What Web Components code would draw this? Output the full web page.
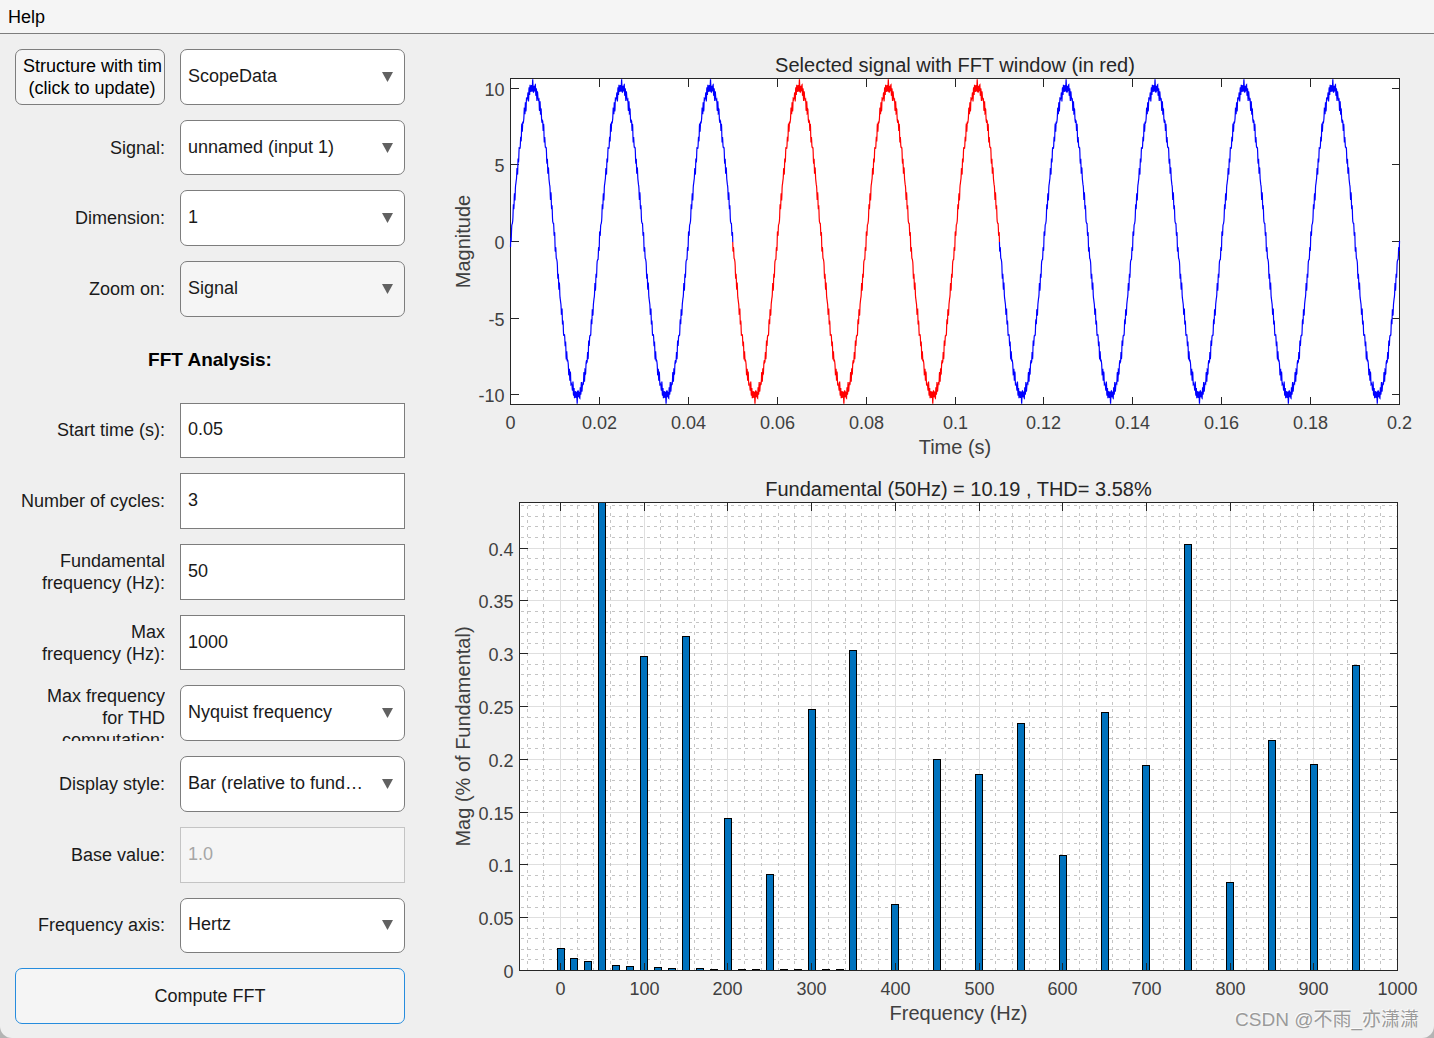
<!DOCTYPE html>
<html lang="en">
<head>
<meta charset="utf-8">
<title>FFT Analyzer</title>
<style>
  html { background: #b4b4b4; }
  body { margin: 0; font-family: "Liberation Sans", Arial, sans-serif; font-size: 18px; line-height: 22px; color: #1a1a1a; }
</style>
</head>
<body>
<fft-window>
  <menu-strip slot="menu">Help</menu-strip>
  <settings-panel slot="panel">
    <select-row action="Structure with tim|(click to update)" value="ScopeData"></select-row>
    <select-row label="Signal:" value="unnamed (input 1)"></select-row>
    <select-row label="Dimension:" value="1"></select-row>
    <select-row label="Zoom on:" value="Signal" tone="muted"></select-row>
    <section-title>FFT Analysis:</section-title>
    <text-row label="Start time (s):" value="0.05"></text-row>
    <text-row label="Number of cycles:" value="3"></text-row>
    <text-row label="Fundamental frequency&nbsp;(Hz):" value="50"></text-row>
    <text-row label="Max frequency&nbsp;(Hz):" value="1000"></text-row>
    <select-row label="Max frequency for THD computation:" value="Nyquist frequency"></select-row>
    <select-row label="Display style:" value="Bar (relative to fundamental)"></select-row>
    <text-row label="Base value:" value="1.0" disabled></text-row>
    <select-row label="Frequency axis:" value="Hertz"></select-row>
    <action-button>Compute FFT</action-button>
  </settings-panel>
  <signal-plot slot="signal"></signal-plot>
  <spectrum-plot slot="spectrum"></spectrum-plot>
  <water-mark slot="mark">CSDN @不雨_亦潇潇</water-mark>
</fft-window>

<script>
const base = `
  *, *::before, *::after { box-sizing: border-box; }
  button, input, select { font: inherit; color: inherit; margin: 0; }
`;

class BaseElement extends HTMLElement {
  constructor() {
    super();
    this.attachShadow({ mode: 'open' });
  }
  connectedCallback() {
    this.shadowRoot.innerHTML = `<style>${base}${this.styles()}</style>${this.markup()}`;
  }
  attr(name) { return this.getAttribute(name) || ''; }
}

customElements.define('fft-window', class extends BaseElement {
  styles() { return `
    :host { display: flex; flex-direction: column; min-height: 100vh; position: relative;
            background: #efefef; border-radius: 0 0 12px 12px; overflow: hidden; }
    main { flex: 1; display: flex; }
    .plots { flex: 1; min-width: 0; display: grid; grid-template-rows: minmax(0, 434fr) minmax(0, 570fr); }
  `; }
  markup() { return `
    <slot name="menu"></slot>
    <main>
      <slot name="panel"></slot>
      <div class="plots"><slot name="signal"></slot><slot name="spectrum"></slot></div>
    </main>
    <slot name="mark"></slot>`; }
});

customElements.define('menu-strip', class extends BaseElement {
  styles() { return `
    :host { display: block; background: #f5f5f5; border-bottom: 1px solid #7d7d7d; }
    nav { display: flex; }
    button { border: 0; background: none; padding: 6px 8px 5px; line-height: 22px; color: #000; }
  `; }
  markup() { return `<nav><button type="button"><slot></slot></button></nav>`; }
});

customElements.define('settings-panel', class extends BaseElement {
  styles() { return `
    :host { display: grid; flex: none; width: 420px; }
    form { padding: 15px 15px 14px; display: grid; grid-auto-rows: minmax(48px, 1fr); gap: 15px; }
  `; }
  markup() { return `<form><slot></slot></form>`; }
});

customElements.define('section-title', class extends BaseElement {
  styles() { return `
    :host { display: flex; align-items: center; justify-content: center; }
    h2 { margin: 0; font-size: 19px; line-height: 22px; color: #000; }
  `; }
  markup() { return `<h2><slot></slot></h2>`; }
});

const rowStyles = `
  :host { display: grid; grid-template-columns: 150px minmax(0, 1fr); gap: 15px; min-height: 0; }
  .caption { display: flex; align-items: safe center; justify-content: flex-end; overflow: hidden; contain: size; }
  label { text-align: right; width: 128px; }
  label.line { width: auto; white-space: nowrap; }
`;
const caption = text =>
  `<div class="caption"><label for="field" class="${text.length < 18 ? 'line' : ''}">${text}</label></div>`;

customElements.define('select-row', class extends BaseElement {
  styles() { return rowStyles + `
    .box { position: relative; min-height: 0; }
    select { appearance: none; display: block; width: 100%; height: 100%; padding: 0 36px 2px 7px;
      border: 1px solid #7d7d7d; border-radius: 7px; background: #fff;
      white-space: nowrap; overflow: hidden; text-overflow: ellipsis; }
    :host([tone="muted"]) select { background: #f5f5f5; }
    svg { position: absolute; right: 12px; top: 50%; margin-top: -5px; pointer-events: none; }
    button { border: 1px solid #7d7d7d; border-radius: 7px; background: #f5f5f5; min-width: 0;
      padding: 0 3px 0 7px; white-space: nowrap; overflow: hidden; color: #000; text-align: center; line-height: 22px; }
    span { display: block; }
  `; }
  markup() {
    const action = this.attr('action');
    const lead = action
      ? `<button type="button">${action.split('|').map(t => `<span>${t}</span>`).join('')}</button>`
      : caption(this.attr('label'));
    return `${lead}
      <div class="box">
        <select id="field" ${action ? 'aria-label="Structure"' : ''}><option>${this.attr('value')}</option></select>
        <svg width="11" height="10" viewBox="0 0 11 10"><path d="M0 0H11L5.5 10Z" fill="#616161"/></svg>
      </div>`;
  }
});

customElements.define('text-row', class extends BaseElement {
  styles() { return rowStyles + `
    input { width: 100%; height: 100%; min-height: 0; padding: 0 7px 1px; border: 1px solid #7d7d7d; border-radius: 0; background: #fff; }
    input:disabled { border-color: #c4c4c4; background: #f5f5f5; color: #a6a6a6; }
  `; }
  markup() { return caption(this.attr('label')) +
    `<input id="field" type="text" value="${this.attr('value')}" ${this.hasAttribute('disabled') ? 'disabled' : ''}>`; }
});

customElements.define('action-button', class extends BaseElement {
  styles() { return `
    :host { display: grid; }
    button { border: 1px solid #268cdd; border-radius: 7px; background: #f5f5f5; padding-bottom: 2px; }
  `; }
  markup() { return `<button type="button"><slot></slot></button>`; }
});

customElements.define('water-mark', class extends BaseElement {
  styles() { return `
    :host { position: absolute; right: 15px; bottom: 6px; font: 19px/24px "Liberation Sans", "Noto Sans CJK SC", sans-serif;
      color: #9a9a9a; text-shadow: -1px -1px 0 #fbfbfb; pointer-events: none; }
  `; }
  markup() { return `<slot></slot>`; }
});

/* Shared axes drawing: frame, ticks, tick labels, title and axis captions. */
class PlotElement extends BaseElement {
  styles() { return `
    :host { display: block; min-width: 0; min-height: 0; overflow: hidden; contain: size; }
    svg { display: block; width: 100%; height: 100%; font-size: 18px; fill: #404040; }
    .big { font-size: 20px; }
    .title { fill: #262626; }
    .axis { stroke: #262626; fill: none; shape-rendering: crispEdges; }
  `; }
  markup() { return `<svg></svg>`; }
  connectedCallback() {
    super.connectedCallback();
    this.draw();
    new ResizeObserver(() => this.draw()).observe(this);
  }
  draw() {
    const W = this.clientWidth, H = this.clientHeight;
    if (!W || !H) return;
    const c = this.config, m = c.margin;
    const L = m.left + .5, R = W - m.right + .5, T = m.top + .5, B = H - m.bottom + .5;
    const X = v => L + (v - c.x[0]) / (c.x[1] - c.x[0]) * (R - L);
    const Y = v => B - (v - c.y[0]) / (c.y[1] - c.y[0]) * (B - T);
    const snap = v => Math.floor(v) + .5;
    let ticks = '', text = '';
    for (const v of c.xTicks) {
      const x = snap(X(v));
      ticks += `M${x} ${B}v-8M${x} ${T}v8`;
      text += `<text x="${x}" y="${B + 24}" text-anchor="middle">${v}</text>`;
    }
    for (const v of c.yTicks) {
      const y = snap(Y(v));
      ticks += `M${L} ${y}h8M${R} ${y}h-8`;
      text += `<text x="${L - 6}" y="${y + 7}" text-anchor="end">${v}</text>`;
    }
    const cx = (L + R) / 2, cy = (T + B) / 2;
    this.shadowRoot.querySelector('svg').innerHTML = `
      <rect x="${L}" y="${T}" width="${R - L}" height="${B - T}" fill="#fff"/>
      ${this.under(X, Y, { L, R, T, B, snap })}
      <path class="axis" d="${ticks}M${L} ${T}H${R}V${B}H${L}Z"/>
      ${this.over(X, Y, { L, R, T, B, snap })}
      ${text}
      <text class="big title" x="${cx}" y="${T - 7}" text-anchor="middle">${c.title}</text>
      <text class="big" x="${cx}" y="${B + 49}" text-anchor="middle">${c.xLabel}</text>
      <text class="big" transform="translate(50 ${cy}) rotate(-90)" text-anchor="middle">${c.yLabel}</text>`;
  }
  under() { return ''; }
  over() { return ''; }
}

customElements.define('signal-plot', class extends PlotElement {
  config = {
    margin: { left: 90, right: 35, top: 44, bottom: 64 },
    x: [0, .2], y: [-10.65, 10.65],
    xTicks: [0, .02, .04, .06, .08, .1, .12, .14, .16, .18, .2],
    yTicks: [-10, -5, 0, 5, 10],
    title: 'Selected signal with FFT window (in red)', xLabel: 'Time (s)', yLabel: 'Magnitude'
  };
  over(X, Y) {
    const wave = t => {
      const w = 2 * Math.PI * 50 * t;
      return 10.08 * Math.sin(w) + .25 * Math.sin(73 * w) + .15 * Math.sin(97 * w) + .12 * Math.sin(33 * w + .3)
        - (t < .0002 ? .4 : 0);
    };
    const trace = (a, b, color) => {
      const pts = [];
      for (let i = Math.round(a * 20000); i <= Math.round(b * 20000); i++) {
        const t = i / 20000;
        pts.push(X(t).toFixed(2) + ',' + Y(Math.max(-10.6, Math.min(10.6, wave(t)))).toFixed(2));
      }
      return `<polyline points="${pts.join(' ')}" fill="none" stroke="${color}" stroke-width="1.2"/>`;
    };
    return trace(0, .05, '#00f') + trace(.11, .2, '#00f') + trace(.05, .11, '#f00');
  }
});

customElements.define('spectrum-plot', class extends PlotElement {
  config = {
    margin: { left: 99, right: 37, top: 34, bottom: 68 },
    x: [-49, 1000], y: [0, .4432],
    xTicks: [0, 100, 200, 300, 400, 500, 600, 700, 800, 900, 1000],
    yTicks: [0, .05, .1, .15, .2, .25, .3, .35, .4],
    title: 'Fundamental (50Hz) = 10.19 , THD= 3.58%', xLabel: 'Frequency (Hz)', yLabel: 'Mag (% of Fundamental)'
  };
  under(X, Y, { L, R, T, B, snap }) {
    let major = '', minor = '', bars = '';
    for (let f = -40; f < 1000; f += 20) {
      if (f % 100) minor += `M${snap(X(f))} ${B}V${T}`;
      else major += `M${snap(X(f))} ${B}V${T}`;
    }
    for (let i = 1; i <= 44; i++) {
      const y = snap(Y(i / 100));
      if (i % 5) minor += `M${L + 1} ${y}H${R}`;
      else major += `M${L} ${y}H${R}`;
    }
    const harmonics = [.0205, .5, .297, .316, .144, .091, .2475, .3035, .0625, .1995, .186, .2335,
      .109, .244, .1945, .403, .0835, .2175, .1955, .2885];
    const data = harmonics.map((v, i) => [i * 50, v]);
    const minorBars = [[1, .011], [2, .0085], [4, .005], [5, .0038], [7, .003], [8, .002], [10, .002], [11, .001],
      [13, .001], [14, .001], [16, .001], [17, .001], [19, .001], [20, .001]];
    for (const [n, v] of minorBars) data.push([n * 50 / 3, v]);
    for (const [f, v] of data) {
      const x = Math.round(X(f) - 4) + .5, y = Math.max(T, snap(Y(v)));
      bars += `M${x} ${B}V${y}h7V${B}`;
    }
    return `
      <path d="${major}" stroke="#dfdfdf" fill="none" shape-rendering="crispEdges"/>
      <path d="${minor}" stroke="#c4c4c4" fill="none" stroke-dasharray="3 4" shape-rendering="crispEdges"/>
      <path d="${bars}" stroke="#000" fill="#0072bd" shape-rendering="crispEdges"/>`;
  }
});
</script>
</body>
</html>
